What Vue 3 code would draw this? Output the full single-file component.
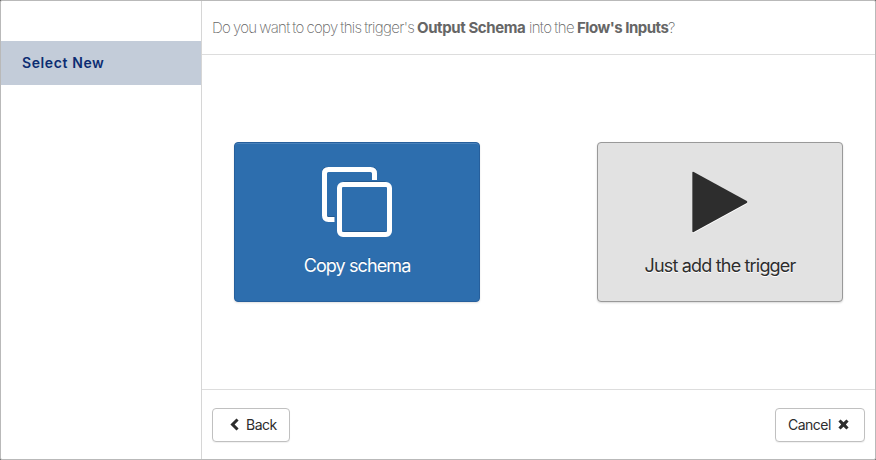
<script setup>
const steps = [{ label: 'Select New', active: true }]
</script>

<template>
  <div class="frame">
    <div class="modal">
      <aside class="sidebar">
        <div v-for="s in steps" :key="s.label" class="step" :class="{ active: s.active }">{{ s.label }}</div>
      </aside>
      <main class="main">
        <header class="header">
          <span class="thin lead">Do you want to copy this trigger's</span>
          <b class="schema">Output Schema</b>
          <span class="thin into">into the</span>
          <b class="inputs">Flow's Inputs</b>
          <span class="thin">?</span>
        </header>
        <section class="choices">
          <button class="card primary">
            <svg width="70" height="70" viewBox="0 0 70 70">
              <path class="shade" d="M12.5 51.500H6.500Q2.500 51.500 2.500 47.500V5.500Q2.500 1.500 6.500 1.500H48.500Q52.500 1.500 52.500 5.500V12M21.500 16.500H63.500M21.500 66.500H63.500" />
              <path d="M12.500 52.500H6.500Q2.500 52.500 2.500 48.500V6.500Q2.500 2.500 6.500 2.500H48.500Q52.500 2.500 52.500 6.500V13" />
              <rect x="17.500" y="17.500" width="50" height="50" rx="3.500" />
            </svg>
            <span class="label copy">Copy schema</span>
          </button>
          <button class="card plain">
            <svg width="70" height="70" viewBox="0 0 70 70">
              <path class="light" d="M7.300 6.500Q7.300 5 8.800 5.700L61.800 34.700Q63 35.800 61.800 37L8.800 66Q7.300 66.700 7.300 65Z" />
              <path class="play" d="M7.300 5.700Q7.300 4.200 8.800 4.900L61.800 34Q63 35 61.800 36L8.800 65.100Q7.300 65.800 7.300 64.300Z" />
            </svg>
            <span class="label just">Just add the trigger</span>
          </button>
        </section>
        <footer class="footer">
          <button class="btn back">
            <svg width="9" height="13" viewBox="0 0 9 13"><path d="M6.500 0.400L8.600 2.400L4.600 6.500L8.600 10.600L6.500 12.600L0.400 6.500Z" /></svg>
            <span>Back</span>
          </button>
          <button class="btn cancel">
            <span>Cancel</span>
            <svg width="11" height="11" viewBox="0 0 11 11"><path d="M2.600 .4L5.500 3.200L8.400 .4L10.600 2.600L7.800 5.500L10.600 8.400L8.400 10.600L5.500 7.800L2.600 10.600L.4 8.400L3.200 5.500L.4 2.600Z" /></svg>
          </button>
        </footer>
      </main>
    </div>
  </div>
</template>

<style>
body { background: #666; }
</style>

<style scoped>
* { box-sizing: border-box; }
.frame { width: 876px; height: 460px; font-family: Inter, "Liberation Sans", sans-serif; }
.modal { display: flex; height: 100%; border: 1px solid #b9b9b9; border-radius: 2px; background: #fff; overflow: hidden; }
.sidebar { width: 201px; padding-top: 40px; border-right: 1px solid #d6d6d6; }
.step { height: 44px; padding-left: 21px; line-height: 44px; font-size: 14px; font-weight: 600; letter-spacing: 0.6px; color: #0c2c72; }
.step.active { background: #c3ccd9; }
.main { flex: 1; display: flex; flex-direction: column; }
.header { display: flex; height: 54px; padding-left: 10px; line-height: 53px; border-bottom: 1px solid #ddd; font-size: 15px; color: #666; white-space: nowrap; }
.thin { font-weight: 200; letter-spacing: -0.65px; }
.lead { width: 205px; word-spacing: -0.900px; }
.schema { width: 112px; }
.into { width: 48px; word-spacing: -0.500px; }
.inputs { width: 91px; }
.header b { font-weight: 700; letter-spacing: -0.4px; }
.header .inputs { letter-spacing: -0.480px; }
.choices { flex: 1; display: flex; justify-content: space-between; align-items: center; padding: 0 32px; }
.card { width: 246px; height: 160px; padding: 24px 0 0; display: flex; flex-direction: column; align-items: center; border-radius: 4px; font-family: inherit; }
.card svg { display: block; flex: none; }
.primary { background: #2d6eae; border: 1px solid #265f9c; color: #fff; box-shadow: inset 0 1px 0 #4a82bb, 0 1px 2px rgba(0,0,0,.12); text-shadow: 0 -1px 0 rgba(0,0,0,.2); }
.primary path, .primary rect { fill: none; stroke: #fff; stroke-width: 5; }
.primary .shade { stroke: #245a91; }
.plain { background: #e2e2e2; border: 1px solid #999; color: #2d2d2d; box-shadow: 0 1px 2px rgba(0,0,0,.15); text-shadow: 0 1px 0 #fff; }
.play { fill: #2d2d2d; }
.light { fill: #fff; }
.label { margin-top: 17px; font-size: 18px; line-height: 24px; letter-spacing: -0.85px; white-space: nowrap; }
.label.copy { letter-spacing: -0.9px; }
.label.just { letter-spacing: -0.82px; }
.footer { height: 70px; padding: 0 10px; display: flex; justify-content: space-between; align-items: center; border-top: 1px solid #ddd; }
.btn { height: 34px; padding: 0; display: flex; align-items: center; background: #fff; border: 1px solid #c0c0c0; border-radius: 4px; box-shadow: 0 1px 1px rgba(0,0,0,.06); font-family: inherit; font-size: 14px; letter-spacing: -0.5px; color: #2d2d2d; }
.btn path { fill: #2d2d2d; }
.back { width: 78px; padding-left: 17px; gap: 7px; }
.cancel { width: 90px; padding-left: 12px; gap: 7px; }
</style>
